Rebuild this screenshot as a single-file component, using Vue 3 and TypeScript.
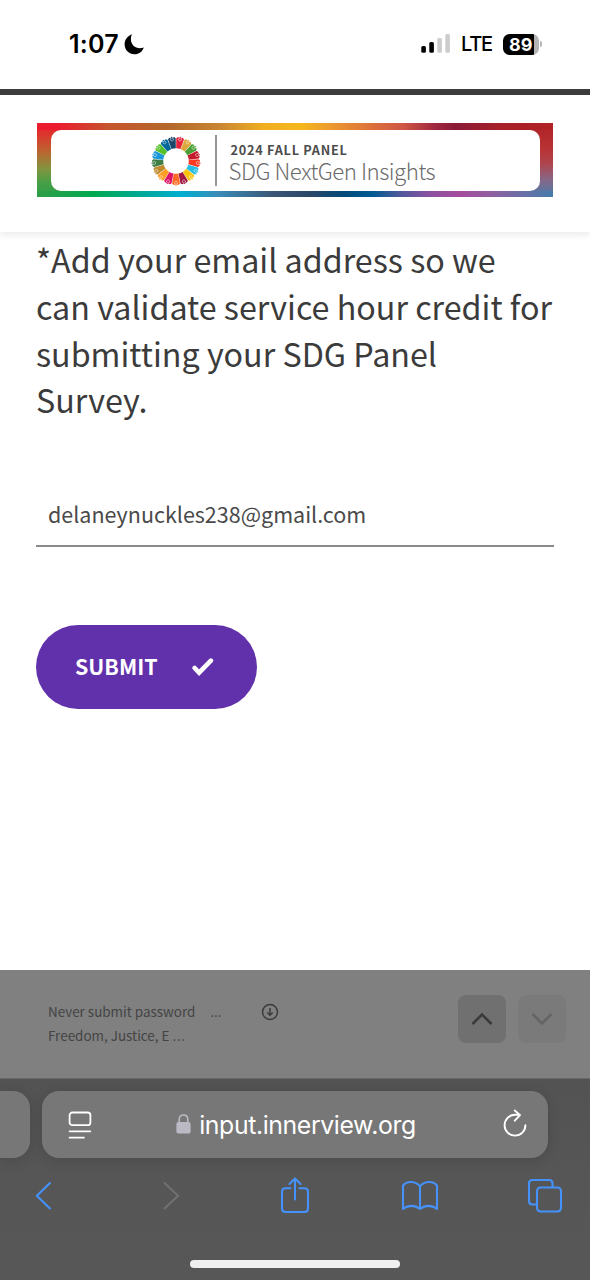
<script setup lang="ts">
import { ref } from 'vue'

const email = ref<string>('delaneynuckles238@gmail.com')

const goalColors: string[] = [
  '#e5243b', '#dda63a', '#4c9f38', '#c5192d', '#ff3a21', '#26bde2', '#fcc30b', '#a21942', '#fd6925',
  '#dd1367', '#fd9d24', '#bf8b2e', '#3f7e44', '#1a97d9', '#56c02b', '#00689d', '#19486a',
]

const step = 360 / goalColors.length
const wedges = goalColors.map((color, i) => ({ color, turn: `rotate(${(i + 0.5) * step})` }))
</script>

<template>
  <div class="screen">
    <header class="status">
      <div class="clock">
        <span class="time">1:07</span>
        <svg class="moon" width="20" height="21" viewBox="0 0 20 21">
          <path d="M8 .7C7.300 1.100 6.900 3.100 6.900 5.300C6.900 10.500 10.800 14.200 16 14.200C17.400 14.200 18.500 13.900 19.500 13.400C19.700 13.500 19.700 13.700 19.600 13.900C18.200 17.700 14.800 20.200 10.600 20.200C4.800 20.200.6 16 .6 10.300C.6 6.100 3.200 2.300 7.400.6C7.700.4 8 .5 8 .7Z" />
        </svg>
      </div>
      <div class="signals">
        <svg width="30" height="20" viewBox="0 0 30 20">
          <rect x="0.300" y="12" width="4.600" height="6.800" rx="1.600" />
          <rect x="8.300" y="8" width="4.600" height="10.800" rx="1.600" />
          <rect x="16.300" y="4" width="4.600" height="14.800" rx="1.600" fill="#ccc" />
          <rect x="24.300" y="0" width="4.600" height="18.800" rx="1.600" fill="#ccc" />
        </svg>
        <span class="network">LTE</span>
        <div class="battery"><span>89</span></div>
        <i class="battery-tip"></i>
      </div>
    </header>

    <section class="brand">
      <div class="banner">
        <div class="plate">
          <svg class="wheel" width="52" height="52" viewBox="-26 -26 52 52">
            <g v-for="w in wedges" :key="w.color" :transform="w.turn">
              <path :fill="w.color" d="M-2.200-12.600L-3.900-22.500L-2.500-24L-1.300-23.500L0-24.900L1.300-23.500L2.500-24L3.900-22.500L2.200-12.600Q0-13-2.200-12.600Z" />
              <circle cx="0" cy="-21.900" r="1.500" fill="none" stroke="#fff" stroke-opacity=".6" stroke-width=".8" />
            </g>
          </svg>
          <div class="rule"></div>
          <div class="brand-text">
            <div class="season">2024 FALL PANEL</div>
            <div class="title">SDG NextGen Insights</div>
          </div>
        </div>
      </div>
    </section>

    <main class="form">
      <h1>*Add your email address so we<br />can validate service hour credit for<br />submitting your SDG Panel<br />Survey.</h1>
      <input v-model="email" class="email" type="text" />
      <button class="submit">
        <span>SUBMIT</span>
        <svg width="22" height="20" viewBox="0 0 22 20">
          <path d="M2.700 11L7.100 15.700L18.900 3.600" fill="none" stroke="#fff" stroke-width="4.600" stroke-linecap="round" />
        </svg>
      </button>
    </main>

    <footer class="notice">
      <div class="notes">
        <div class="line"><span>Never submit password</span><span class="dots">...</span></div>
        <div class="line">Freedom, Justice, E&nbsp;<span class="more">...</span></div>
      </div>
      <svg class="download" width="18" height="18" viewBox="0 0 18 18" fill="none" stroke="#3b3b3b" stroke-width="1.500">
        <circle cx="9" cy="9" r="7.500" />
        <path d="M9 5V12M6.300 9.500L9 12.200L11.700 9.500" />
      </svg>
      <div class="steps">
        <div class="step up">
          <svg width="22" height="14" viewBox="0 0 22 14"><path d="M1.500 12L11 2.500L20.500 12" fill="none" stroke="#3a3a3a" stroke-width="2.600" /></svg>
        </div>
        <div class="step down">
          <svg width="22" height="14" viewBox="0 0 22 14"><path d="M1.500 2L11 11.500L20.500 2" fill="none" stroke="#646464" stroke-width="2.600" /></svg>
        </div>
      </div>
    </footer>

    <nav class="browser">
      <div class="address-row">
        <div class="previous-tab"></div>
        <div class="address">
          <svg class="page-icon" width="24" height="29" viewBox="0 0 24 29" fill="none" stroke="#fff" stroke-width="1.800" stroke-linecap="round">
            <rect x="1.600" y="1.500" width="20.800" height="12.700" rx="2.800" />
            <path d="M1.600 20.300H22.300M1.600 26.600H16" />
          </svg>
          <div class="host">
            <svg width="15" height="20" viewBox="0 0 15 20">
              <rect x=".4" y="8" width="14.200" height="11.500" rx="2" fill="#bbb9c3" />
              <path d="M3.200 9V5.400C3.200 2.700 5 1 7.500 1S11.800 2.700 11.800 5.400V9" fill="none" stroke="#bbb9c3" stroke-width="1.600" />
            </svg>
            <span>input.innerview.org</span>
          </div>
          <svg class="reload" width="24" height="29" viewBox="0 0 24 29" fill="none" stroke="#fff" stroke-width="1.900" stroke-linecap="round" stroke-linejoin="round">
            <path d="M22.400 16.200A10.400 10.400 0 1 1 12 5.800H16.800M11.800 1.500L17 6.100L11.800 11.700" />
          </svg>
        </div>
      </div>
      <div class="tools">
        <svg width="38" height="38" viewBox="25 1177 38 38"><path d="M50 1183L36.800 1195.800L50 1208.500" /></svg>
        <svg class="disabled" width="38" height="38" viewBox="150 1177 38 38"><path d="M164.500 1183L178.100 1195.800L164.500 1208.500" /></svg>
        <svg width="38" height="38" viewBox="276 1177 38 38"><path d="M290.400 1188.200H285.500Q282 1188.200 282 1191.700V1208.500Q282 1212 285.500 1212H304.500Q308 1212 308 1208.500V1191.700Q308 1188.200 304.500 1188.200H299.400M295 1199.500V1178.500M289.500 1184L295 1178.500L300.500 1184" /></svg>
        <svg width="38" height="38" viewBox="401 1177 38 38"><path d="M420 1186.500C416 1181 407 1180.500 403 1185.500V1209C408 1204.800 415 1204.800 420 1209C425 1204.800 432 1204.800 437 1209V1185.500C433 1180.500 424 1181 420 1186.500ZM420 1186.500V1209" /></svg>
        <svg width="38" height="38" viewBox="526 1177 38 38"><path d="M536 1204.500H532.500Q529 1204.500 529 1201V1183.500Q529 1180 532.500 1180H549Q552.500 1180 552.500 1183.500V1187" /><rect x="537" y="1187.500" width="24" height="24" rx="3.500" /></svg>
      </div>
      <div class="home"></div>
    </nav>
  </div>
</template>

<style>
body {
  margin: 0;
}
</style>

<style scoped>
* {
  box-sizing: border-box;
}

svg {
  display: block;
  flex: none;
}

.screen {
  width: 590px;
  height: 1280px;
  overflow: hidden;
  display: flex;
  flex-direction: column;
  background: #fff;
  color: #3b3b3b;
  font-family: "Noto Sans CJK SC", "Noto Sans", sans-serif;
  white-space: nowrap;
}

.status {
  flex: none;
  height: 95px;
  padding: 0 46px 0 69px;
  display: flex;
  justify-content: space-between;
  align-items: flex-start;
  border-bottom: 6px solid #3d3d3d;
  color: #000;
  font-family: Inter, sans-serif;
}

.clock,
.signals {
  height: 88px;
  display: flex;
  align-items: center;
}

.time {
  width: 55px;
  font-size: 25px;
  font-weight: 600;
  letter-spacing: 0.2px;
}

.network {
  width: 42px;
  margin-left: 10px;
  font-size: 20px;
  font-weight: 500;
  letter-spacing: -1.2px;
}

.battery {
  width: 36px;
  height: 21px;
  border-radius: 6.500px;
  background: linear-gradient(90deg, #000 31px, #b5b5b5 31px);
  color: #fff;
  font-size: 18px;
  font-weight: 700;
  line-height: 21px;
  padding-left: 6px;
}

.battery-tip {
  width: 2px;
  height: 6px;
  margin: 0 2px 0 1px;
  border-radius: 0 2px 2px 0;
  background: #b5b5b5;
}

.brand {
  flex: none;
  height: 137px;
  padding: 28px 37px 0 37px;
  box-shadow: 0 2px 8px rgba(0, 0, 0, 0.1);
}

.banner {
  width: 516px;
  height: 74px;
  padding: 7px 13px 6px 14px;
  background:
    linear-gradient(90deg, #ec1c2e 4%, #c5552e 14%, #b4692b 26%, #c88430 35%, #f0ae20 44%, #f5b71b 51%, #ee9f2c 56%, #dc703c 65%, #cf5545 71%, #a02840 77%, #8a1a38 81%, #a82028 90%, #b02226) 0 0 / 100% 7px no-repeat,
    linear-gradient(90deg, #2f9e48, #00a94f 11%, #00a99d 21%, #00aed0 28%, #3a8cb8 35%, #3a5575 46%, #2a4868 53%, #004b7c 60%, #005a94 65%, #4a5a9a 70%, #8a50a0 76%, #a54c9c 82%, #9060a0 88%, #457cab) 0 100% / 100% 6px no-repeat,
    linear-gradient(180deg, #ec1c2e, #d93a2e 18%, #b8682f 40%, #7f953f 63%, #43a047 82%, #2f9e48) 0 0 / 24px 100% no-repeat,
    linear-gradient(180deg, #b02226, #b83234 35%, #ae454e 55%, #84698a 78%, #457cab) 100% 0 / 24px 100% no-repeat;
}

.plate {
  height: 61px;
  padding-left: 99px;
  display: flex;
  align-items: center;
  border-radius: 10px;
  background: #fff;
}

.wheel {
  margin-top: 1px;
}

.rule {
  width: 1.500px;
  height: 51px;
  margin-left: 13px;
  background: #959595;
}

.brand-text {
  margin-left: 12px;
}

.season {
  padding-left: 2px;
  font-size: 12.700px;
  font-weight: 700;
  line-height: 19px;
  letter-spacing: 0.750px;
  color: #4c4c4c;
}

.title {
  font-size: 22.300px;
  font-weight: 300;
  line-height: 22px;
  letter-spacing: -0.480px;
  color: #6c6c6c;
}

.form {
  flex: 1;
  padding: 4.400px 36px 0;
  display: flex;
  flex-direction: column;
  align-items: flex-start;
}

h1 {
  margin: 0;
  font-size: 32.250px;
  font-weight: 400;
  line-height: 46.670px;
}

.email {
  width: 518px;
  height: 60px;
  margin-top: 63.600px;
  padding: 0 12px 4px;
  border: 0;
  border-bottom: 2px solid #8a8a8a;
  border-radius: 0;
  background: none;
  outline: none;
  color: #4a4a4a;
  font: 400 21.500px "Noto Sans CJK SC", "Noto Sans", sans-serif;
}

.submit {
  width: 221px;
  height: 84px;
  margin-top: 78px;
  padding: 0 43px 0 39px;
  display: flex;
  align-items: center;
  justify-content: space-between;
  border: 0;
  border-radius: 42px;
  background: #6131ac;
  color: #fff;
  font: 700 21.400px "Noto Sans CJK SC", "Noto Sans", sans-serif;
}

.submit span {
  padding-bottom: 2px;
}

.submit svg {
  margin-top: 1px;
}

.notice {
  flex: none;
  height: 108px;
  padding: 24.500px 24px 0 48px;
  display: flex;
  align-items: flex-start;
  background: #808080;
}

.notes {
  width: 213px;
  padding-top: 4px;
  color: #444;
  font-size: 13.450px;
  line-height: 24px;
}

.line {
  display: flex;
}

.dots {
  margin-left: 15px;
}

.more {
  letter-spacing: 0.7px;
}

.download {
  margin-top: 8.500px;
}

.steps {
  margin-left: auto;
  display: flex;
  gap: 12px;
}

.step {
  width: 48px;
  height: 48px;
  border-radius: 8px;
  display: flex;
  align-items: center;
  justify-content: center;
}

.up {
  background: #707070;
}

.down {
  background: #7a7a7a;
}

.browser {
  flex: none;
  height: 202px;
  padding-top: 12px;
  background: linear-gradient(180deg, #535353, #565656 50%, #575757);
  border-top: 1px solid #686868;
  display: flex;
  flex-direction: column;
}

.address-row {
  height: 67px;
  display: flex;
  gap: 12px;
}

.previous-tab,
.address {
  height: 67px;
  background: #777;
  box-shadow: 0 2px 14px rgba(0, 0, 0, 0.14);
}

.previous-tab {
  width: 30px;
  border-radius: 0 17px 17px 0;
}

.address {
  width: 506px;
  padding: 0 21px 0 26px;
  display: flex;
  align-items: center;
  justify-content: space-between;
  border-radius: 17px;
}

.page-icon {
  margin-top: 1px;
}

.host {
  margin-right: 3px;
  display: flex;
  align-items: center;
  gap: 8px;
  color: #fff;
  font: 400 24.800px Inter, sans-serif;
  letter-spacing: -0.380px;
}

.host svg {
  margin-top: -2px;
}

.reload {
  margin-top: -3px;
}

.tools {
  margin-top: 19px;
  padding: 0 26px 0 25px;
  display: flex;
  justify-content: space-between;
  fill: none;
  stroke: #4592fb;
  stroke-width: 2.100;
  stroke-linecap: round;
  stroke-linejoin: round;
}

.disabled {
  stroke: #707070;
}

.home {
  width: 210px;
  height: 8px;
  margin: 45px 0 0 190px;
  border-radius: 4px;
  background: #efefef;
}
</style>
